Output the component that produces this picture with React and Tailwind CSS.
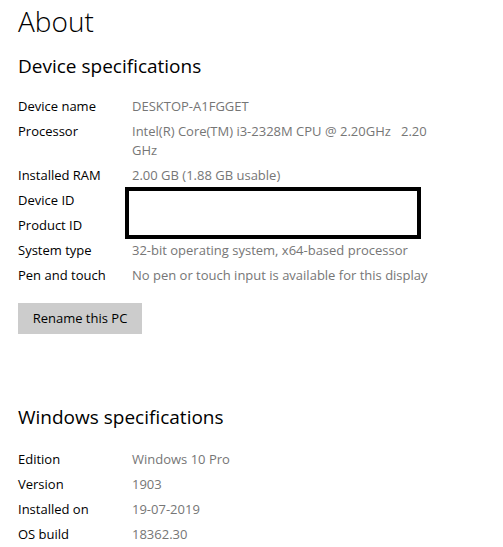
import React from "react";

const deviceSpecs = [
  { label: "Device name", value: "DESKTOP-A1FGGET" },
  { label: "Processor", value: "processor" },
  { label: "Installed RAM", value: "2.00 GB (1.88 GB usable)" },
  { label: "Device ID", value: "" },
  { label: "Product ID", value: "" },
  { label: "System type", value: "32-bit operating system, x64-based processor" },
  { label: "Pen and touch", value: "No pen or touch input is available for this display" },
];

const windowsSpecs = [
  { label: "Edition", value: "Windows 10 Pro" },
  { label: "Version", value: "1903" },
  { label: "Installed on", value: "19-07-2019" },
  { label: "OS build", value: "18362.30" },
];

const SpecRow = ({ label, value }) => (
  <div className="flex items-start">
    <div className="w-[114px] shrink-0 text-black">{label}</div>
    <div className="text-[#767676]">
      {value === "processor" ? (
        <>
          Intel(R) Core(TM) i3-2328M CPU @ 2.20GHz&nbsp;&nbsp;&nbsp;2.20
          <br />
          GHz
        </>
      ) : (
        value || "\u00a0"
      )}
    </div>
  </div>
);

export default function App() {
  return (
    <div className="h-[547px] w-[503px] overflow-hidden bg-white pl-[18px] font-['Open_Sans',sans-serif] text-[13px] leading-[19px]">
      <h1 className="pt-[1px] text-[28px] leading-[40px] font-light text-black">About</h1>

      <h2 className="mt-[11px] text-[19px] leading-[28px] text-black">Device specifications</h2>

      {/* device spec rows, the ID rows are covered by the redaction box */}
      <div className="relative mt-[17px] flex flex-col gap-[6px]">
        {deviceSpecs.map((row) => (
          <SpecRow key={row.label} {...row} />
        ))}
        <div className="absolute left-[107px] top-[90px] h-[52px] w-[296px] border-[4px] border-black bg-white" />
      </div>

      <button className="mt-[18px] h-[31px] w-[124px] bg-[#cccccc] text-[13px] text-black">
        Rename this PC
      </button>

      <h2 className="mt-[69px] text-[19px] leading-[28px] text-black">Windows specifications</h2>

      <div className="mt-[19px] flex flex-col gap-[6px]">
        {windowsSpecs.map((row) => (
          <SpecRow key={row.label} {...row} />
        ))}
      </div>
    </div>
  );
}
